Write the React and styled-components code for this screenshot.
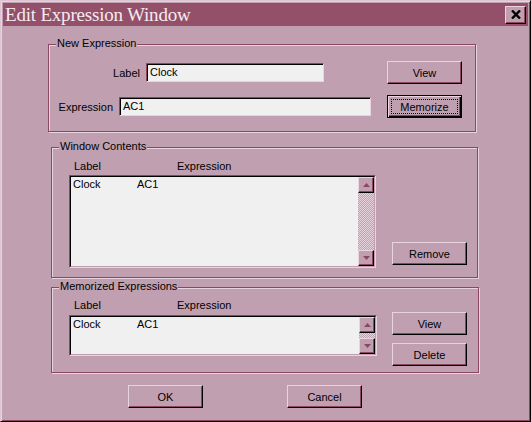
import React from 'react'
import styled, { createGlobalStyle } from 'styled-components'

const face = '#C0A0B0'
const light = '#E8D4DC'
const shadow = '#8C4860'
const field = '#F0F0F0'

const GlobalStyle = createGlobalStyle`
  body {
    margin: 0;
    background: ${face};
  }
`

const Window = styled.div`
  width: 531px;
  height: 422px;
  box-sizing: border-box;
  background: ${face};
  border: 1px solid;
  border-color: #DCC4D0 #000 #000 #DCC4D0;
  box-shadow: inset 1px 1px 0 ${light}, inset -1px -1px 0 ${shadow};
  padding: 2px;
  display: flex;
  flex-direction: column;
  font-family: 'Liberation Sans', Arial, sans-serif;
  font-size: 11px;
  color: #000;
`

const TitleBar = styled.div`
  height: 23px;
  flex: none;
  background: #945068;
  display: flex;
  align-items: center;
  justify-content: space-between;
  padding: 0 2px;
`

const TitleText = styled.span`
  font-family: 'Liberation Serif', 'Times New Roman', serif;
  font-size: 19px;
  letter-spacing: -0.2px;
  line-height: 23px;
  color: #F4ECF0;
`

const CloseButton = styled.div`
  width: 21px;
  height: 18px;
  box-sizing: border-box;
  background: ${face};
  border: 1px solid;
  border-color: ${light} #000 #000 ${light};
  box-shadow: inset -1px -1px 0 ${shadow};
  display: flex;
  align-items: center;
  justify-content: center;
`

const Group = styled.div`
  position: relative;
  flex: none;
  box-sizing: border-box;
  margin: ${p => p.$top}px 0 0 ${p => p.$left}px;
  width: ${p => p.$w}px;
  height: ${p => p.$h}px;
  border: 1px solid ${shadow};
  box-shadow: inset 1px 1px 0 ${light}, 1px 1px 0 ${light};
  padding: ${p => p.$pad};
  display: flex;
  flex-direction: ${p => (p.$column ? 'column' : 'row')};
  gap: ${p => p.$gap || 0}px;
`

const Legend = styled.span`
  position: absolute;
  top: -8px;
  left: 7px;
  line-height: 13px;
  padding: 0 1px;
  background: ${face};
`

const FieldRow = styled.div`
  display: flex;
  align-items: center;
  height: 23px;
`

const FieldLabel = styled.span`
  width: ${p => p.$w}px;
  margin-right: 6px;
  text-align: right;
`

const TextBox = styled.div`
  width: ${p => p.$w}px;
  height: 19px;
  box-sizing: border-box;
  background: ${field};
  border: 1px solid;
  border-color: ${shadow} ${light} ${light} ${shadow};
  box-shadow: inset 1px 1px 0 #000;
  padding-left: 3px;
  line-height: 17px;
`

const Button = styled.button`
  position: relative;
  width: 75px;
  height: 23px;
  box-sizing: border-box;
  padding: 0;
  margin-left: ${p => (p.$push ? 'auto' : '0')};
  background: ${face};
  font: inherit;
  color: #000;
  border: 1px solid;
  border-color: ${p => (p.$default ? '#000' : `${light} #000 #000 ${light}`)};
  box-shadow: ${p =>
    p.$default
      ? `inset 1px 1px 0 ${light}, inset -1px -1px 0 #000, inset -2px -2px 0 ${shadow}`
      : `inset -1px -1px 0 ${shadow}`};

  &::after {
    content: '';
    display: ${p => (p.$default ? 'block' : 'none')};
    position: absolute;
    inset: 3px;
    border: 1px dotted #000;
  }
`

const ListArea = styled.div`
  display: flex;
  flex-direction: column;
  gap: ${p => p.$gap}px;
`

const ListHeader = styled.div`
  display: flex;
  height: 14px;
  line-height: 14px;
  padding-left: 5px;
`

const Column = styled.span`
  width: ${p => p.$w}px;
  flex: none;
`

const ListBox = styled.div`
  width: ${p => p.$w}px;
  height: ${p => p.$h}px;
  box-sizing: border-box;
  border: 1px solid;
  border-color: ${shadow} ${light} ${light} ${shadow};
  display: flex;
`

const ListInner = styled.div`
  flex: 1;
  display: flex;
  border: 1px solid;
  border-color: #000 ${face} ${face} #000;
`

const Items = styled.div`
  flex: 1;
  background: ${field};
  padding: 1px 0 0 2px;
`

const ItemRow = styled.div`
  display: flex;
  line-height: 13px;
`

const ScrollBar = styled.div`
  width: 16px;
  display: flex;
  flex-direction: column;
`

const ScrollButton = styled.div`
  width: 16px;
  height: 16px;
  flex: none;
  box-sizing: border-box;
  background: ${face};
  border: 1px solid;
  border-color: ${light} #000 #000 ${light};
  box-shadow: inset -1px -1px 0 ${shadow};
  display: flex;
  align-items: center;
  justify-content: center;
`

const ScrollTrack = styled.div`
  flex: 1;
  background-color: ${face};
  background-image: linear-gradient(45deg, ${light} 25%, transparent 25%, transparent 75%, ${light} 75%),
    linear-gradient(45deg, ${light} 25%, transparent 25%, transparent 75%, ${light} 75%);
  background-size: 2px 2px;
  background-position: 0 0, 1px 1px;
`

const SideButtons = styled.div`
  display: flex;
  flex-direction: column;
  gap: 8px;
  margin: ${p => p.$top}px 0 0 ${p => p.$left}px;
`

const Footer = styled.div`
  display: flex;
  gap: 84px;
  margin-top: 12px;
  padding-left: 125px;
`

const Arrow = ({ down }) => (
  <svg width="7" height="4" viewBox="0 0 7 4">
    <polygon
      points={down ? '0,0 7,0 3.5,4' : '3.5,0 7,4 0,4'}
      fill={shadow}
    />
  </svg>
)

const Scroller = () => (
  <ScrollBar>
    <ScrollButton>
      <Arrow />
    </ScrollButton>
    <ScrollTrack />
    <ScrollButton>
      <Arrow down />
    </ScrollButton>
  </ScrollBar>
)

const ExpressionList = ({ w, h, gap }) => (
  <ListArea $gap={gap}>
    <ListHeader>
      <Column $w={103}>Label</Column>
      <span>Expression</span>
    </ListHeader>
    <ListBox $w={w} $h={h}>
      <ListInner>
        <Items>
          <ItemRow>
            <Column $w={64}>Clock</Column>
            <span>AC1</span>
          </ItemRow>
        </Items>
        <Scroller />
      </ListInner>
    </ListBox>
  </ListArea>
)

const App = () => {
  return (
    <Window>
      <GlobalStyle />
      <TitleBar>
        <TitleText>Edit Expression Window</TitleText>
        <CloseButton>
          <svg width="10" height="9" viewBox="0 0 10 9">
            <path d="M1 0.5 L9 8.5 M9 0.5 L1 8.5" stroke="#000" strokeWidth="2.4" />
          </svg>
        </CloseButton>
      </TitleBar>

      <Group $top={18} $left={45} $w={428} $h={88} $pad="16px 13px 0 0" $column $gap={11}>
        <Legend>New Expression</Legend>
        <FieldRow>
          <FieldLabel $w={91}>Label</FieldLabel>
          <TextBox $w={178}>Clock</TextBox>
          <Button $push>View</Button>
        </FieldRow>
        <FieldRow>
          <FieldLabel $w={64}>Expression</FieldLabel>
          <TextBox $w={252}>AC1</TextBox>
          <Button $push $default>Memorize</Button>
        </FieldRow>
      </Group>

      <Group $top={15} $left={48} $w={427} $h={131} $pad="11px 0 0 17px">
        <Legend>Window Contents</Legend>
        <ExpressionList w={307} h={93} gap={2} />
        <SideButtons $top={83} $left={16}>
          <Button>Remove</Button>
        </SideButtons>
      </Group>

      <Group $top={9} $left={48} $w={428} $h={86} $pad="10px 0 0 17px">
        <Legend>Memorized Expressions</Legend>
        <ExpressionList w={308} h={41} gap={3} />
        <SideButtons $top={14} $left={15}>
          <Button>View</Button>
          <Button>Delete</Button>
        </SideButtons>
      </Group>

      <Footer>
        <Button>OK</Button>
        <Button>Cancel</Button>
      </Footer>
    </Window>
  )
}

export default App
